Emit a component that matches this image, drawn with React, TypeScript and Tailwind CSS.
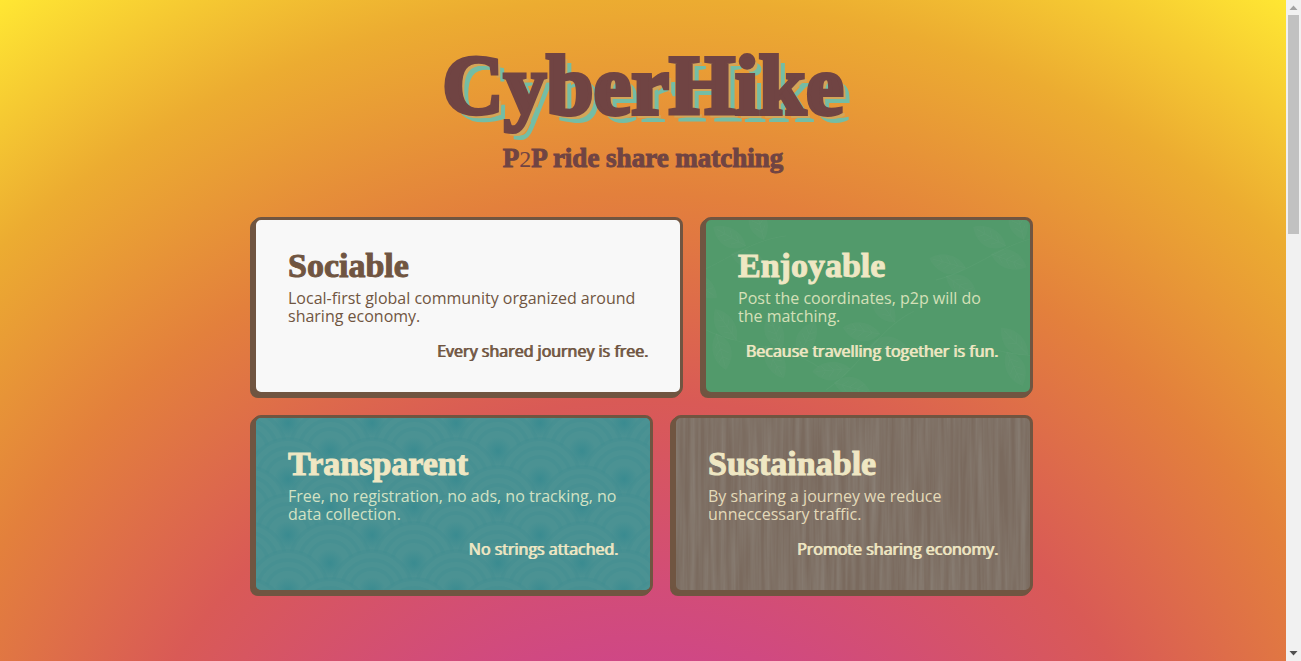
import type { ReactNode } from "react";

type CardProps = {
  title: string;
  text: string;
  tagline: string;
  tone: string;
  textTone: string;
  texture?: ReactNode;
};

function Card({ title, text, tagline, tone, textTone, texture }: CardProps) {
  return (
    <article
      className={`relative overflow-hidden rounded-lg border-3 border-[#705541] p-8 [box-shadow:-1px_1px_#705541,-2px_2px_#705541,-3px_3px_#705541] ${tone}`}
    >
      {texture}
      <div className="relative">
        <h2 className="mb-[9px] font-['Liberation_Serif',serif] text-[34px] leading-7 font-bold [-webkit-text-stroke:1px_currentColor]">
          {title}
        </h2>
        <p className={`text-base leading-[18px] ${textTone}`}>{text}</p>
        <p className="mt-[17px] text-right text-base leading-[18px] [text-shadow:1px_0_currentColor]">{tagline}</p>
      </div>
    </article>
  );
}

function Leaves() {
  return (
    <svg className="absolute inset-0 h-full w-full" aria-hidden="true">
      <defs>
        <g id="leaf">
          <path d="M0 0C10-14 26-14 38 0C28 11 10 11 0 0Z" fill="#9fc3b0" fillOpacity=".06" />
          <path
            d="M0 0H34M8 0l6-6M8 0l6 5M16 0l6-7M16 0l6 6M24 0l5-6M24 0l5 5"
            stroke="#9fc3b0"
            strokeOpacity=".06"
            fill="none"
          />
        </g>
        <g id="branch">
          <path d="M0 0C40-10 70-40 110-44" stroke="#9fc3b0" strokeOpacity=".07" fill="none" />
          <use href="#leaf" transform="translate(10 -4) rotate(35)" />
          <use href="#leaf" transform="translate(30 -12) rotate(-165)" />
          <use href="#leaf" transform="translate(55 -26) rotate(20)" />
          <use href="#leaf" transform="translate(70 -34) rotate(-150)" />
          <use href="#leaf" transform="translate(88 -40) rotate(-105)" />
        </g>
      </defs>
      <use href="#branch" transform="translate(230 60)" />
      <use href="#branch" transform="translate(-30 60)" />
      <use href="#branch" transform="translate(0 110) rotate(40)" />
      <use href="#branch" transform="translate(120 170) rotate(-20)" />
      <use href="#branch" transform="translate(290 130) rotate(30)" />
    </svg>
  );
}

function Waves() {
  const fan = (x: number, y: number) => (
    <g key={`${x}-${y}`} fill="#4b9293" stroke="#3f8c90" strokeOpacity=".35" strokeWidth="4">
      <circle cx={x} cy={y} r="40" />
      <circle cx={x} cy={y} r="31" fill="none" />
      <circle cx={x} cy={y} r="22" fill="none" />
      <circle cx={x} cy={y} r="14" fill="url(#core)" stroke="none" />
    </g>
  );
  return (
    <svg className="absolute inset-0 h-full w-full" aria-hidden="true">
      <defs>
        <radialGradient id="core">
          <stop offset="0" stopColor="#3a8b90" />
          <stop offset="1" stopColor="#3a8b90" stopOpacity="0" />
        </radialGradient>
        <pattern id="waves" width="84" height="56" patternUnits="userSpaceOnUse">
          {[-51, -23, 5, 33, 61, 89].map((y, row) => (row % 2 ? [-10, 74] : [-52, 32, 116]).map((x) => fan(x, y)))}
        </pattern>
      </defs>
      <rect width="100%" height="100%" fill="url(#waves)" />
    </svg>
  );
}

function Wood() {
  return (
    <svg className="absolute inset-0 h-full w-full" aria-hidden="true">
      <defs>
        <filter id="grain" x="0" y="0" width="100%" height="100%" colorInterpolationFilters="sRGB">
          <feTurbulence type="fractalNoise" baseFrequency="0.2 0.008" numOctaves="3" seed="4" />
          <feColorMatrix values="0 0 0 0 .54  0 0 0 0 .5  0 0 0 0 .46  1.5 0 0 0 -.4" />
        </filter>
      </defs>
      <rect width="100%" height="100%" filter="url(#grain)" />
    </svg>
  );
}

export default function App() {
  return (
    <div className="flex h-screen overflow-hidden">
      <main className="min-w-0 flex-1 bg-[radial-gradient(circle_1149px_at_50%_952px,#cb3fa0_0%,#cf4786_25%,#d95a56_48%,#e3803c_66%,#ecac31_83%,#ffe733_100%)] font-['Open_Sans',sans-serif]">
        <header className="pt-[37px] text-center font-['Liberation_Serif',serif] font-bold text-[#704443]">
          <h1 className="text-[85px] leading-24 [-webkit-text-stroke:4px_currentColor] [text-shadow:4px_4px_#d3a558,8px_8px_#74bda5]">
            CyberHike
          </h1>
          <p className="mt-[7px] text-[27px] leading-9 [-webkit-text-stroke:1px_currentColor]">
            P<span className="text-2xl leading-9 font-normal [-webkit-text-stroke:0px]">2</span>P ride share matching
          </p>
        </header>
        <section className="mx-auto mt-10 flex max-w-[780px] flex-col gap-5 text-[#efe7c3]">
          <div className="grid grid-cols-[43fr_33fr] gap-5">
            <Card
              title="Sociable"
              text="Local-first global community organized around sharing economy."
              tagline="Every shared journey is free."
              tone="bg-[#f8f8f8] text-[#705541]"
              textTone="text-[#705541]"
            />
            <Card
              title="Enjoyable"
              text="Post the coordinates, p2p will do the matching."
              tagline="Because travelling together is fun."
              tone="bg-[#529a6b]"
              textTone="text-[#d5e0b8]"
              texture={<Leaves />}
            />
          </div>
          <div className="grid grid-cols-[10fr_9fr] gap-5">
            <Card
              title="Transparent"
              text="Free, no registration, no ads, no tracking, no data collection."
              tagline="No strings attached."
              tone="bg-[#489192]"
              textTone="text-[#d3e2c4]"
              texture={<Waves />}
            />
            <Card
              title="Sustainable"
              text="By sharing a journey we reduce unneccessary traffic."
              tagline="Promote sharing economy."
              tone="bg-[#7a6a5e]"
              textTone="text-[#e4dab9]"
              texture={<Wood />}
            />
          </div>
        </section>
      </main>
      <div className="flex w-[15px] flex-col items-center justify-between bg-[#f1f1f1]" aria-hidden="true">
        <div className="flex w-full flex-col items-center">
          <svg className="h-[15px] w-[15px]" viewBox="0 0 15 15">
            <path d="M7.5 5.5L11.5 10H3.5Z" fill="#a3a3a3" />
          </svg>
          <div className="h-[219px] w-[11px] bg-[#c1c1c1]" />
        </div>
        <svg className="h-[15px] w-[15px]" viewBox="0 0 15 15">
          <path d="M3.5 5H11.5L7.5 9.5Z" fill="#505050" />
        </svg>
      </div>
    </div>
  );
}
